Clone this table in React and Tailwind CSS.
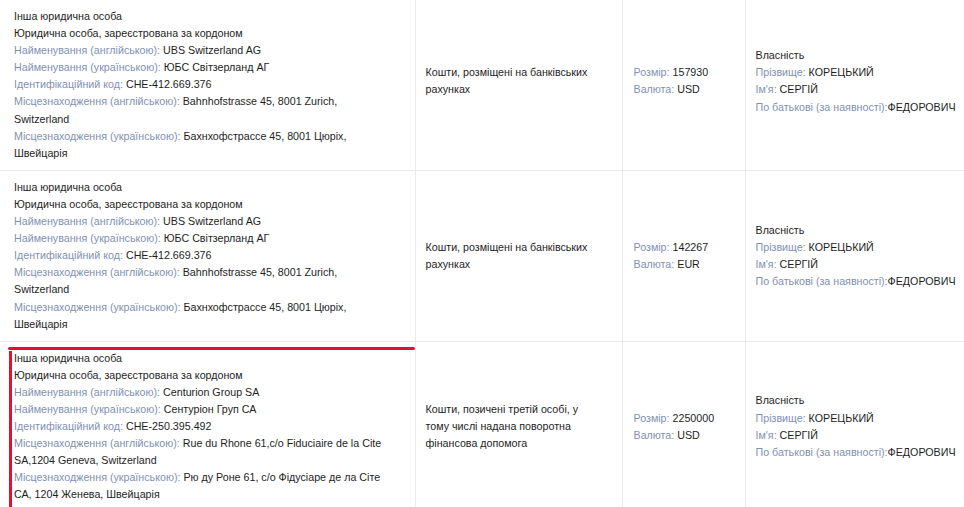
import React from "react";

const L = ({ children }) => <span className="text-[#7f91b3]">{children}</span>;

const rows = [
  {
    en: "UBS Switzerland AG",
    ua: "ЮБС Світзерланд АГ",
    code: "CHE-412.669.376",
    addrEn: "Bahnhofstrasse 45, 8001 Zurich, Switzerland",
    addrUa: "Бахнхофстрассе 45, 8001 Цюріх, Швейцарія",
    type: "Кошти, розміщені на банківських рахунках",
    size: "157930",
    cur: "USD",
    first: true,
  },
  {
    en: "UBS Switzerland AG",
    ua: "ЮБС Світзерланд АГ",
    code: "CHE-412.669.376",
    addrEn: "Bahnhofstrasse 45, 8001 Zurich, Switzerland",
    addrUa: "Бахнхофстрассе 45, 8001 Цюріх, Швейцарія",
    type: "Кошти, розміщені на банківських рахунках",
    size: "142267",
    cur: "EUR",
  },
  {
    en: "Centurion Group SA",
    ua: "Сентуріон Груп СА",
    code: "CHE-250.395.492",
    addrEn: "Rue du Rhone 61,c/o Fiduciaire de la Cite SA,1204 Geneva, Switzerland",
    addrUa: "Рю ду Роне 61, с/о Фідусіаре де ла Сіте СА, 1204 Женева, Швейцарія",
    type: "Кошти, позичені третій особі, у тому числі надана поворотна фінансова допомога",
    size: "2250000",
    cur: "USD",
    marked: true,
  },
];

export default function App() {
  return (
    <div
      className="w-[964px] h-[507px] overflow-hidden bg-white text-[10.7px] leading-[17.1px] text-[#1e1e1e]"
      style={{ fontFamily: '"Liberation Sans", Arial, sans-serif' }}
    >
      <table className="w-[980px] border-collapse table-fixed">
        <colgroup>
          <col className="w-[415px]" />
          <col className="w-[207px]" />
          <col className="w-[123px]" />
          <col className="w-[235px]" />
        </colgroup>
        <tbody>
          {rows.map((r, i) => {
            const pad = r.first ? "pt-[8px] pb-[15px]" : "py-[8px]";
            return (
              <tr key={i} className="border-b border-[#ececec]">
                <td className="relative align-middle pl-[14px] pr-[30px] py-[8px] border-r border-[#ececec]">
                  {r.marked && (
                    <>
                      <div className="absolute left-[8px] top-[5px] w-[407px] h-[3px] rounded-full bg-[#e3112e]" />
                      <div className="absolute left-[9px] top-[9px] w-[3px] h-[520px] bg-[#e3112e]" />
                    </>
                  )}
                  <div>Інша юридична особа</div>
                  <div>Юридична особа, зареєстрована за кордоном</div>
                  <div>
                    <L>Найменування (англійською):</L> {r.en}
                  </div>
                  <div>
                    <L>Найменування (українською):</L> {r.ua}
                  </div>
                  <div>
                    <L>Ідентифікаційний код:</L> {r.code}
                  </div>
                  <div>
                    <L>Місцезнаходження (англійською):</L> {r.addrEn}
                  </div>
                  <div>
                    <L>Місцезнаходження (українською):</L> {r.addrUa}
                  </div>
                </td>
                <td className={`align-middle pl-[10px] pr-[24px] ${pad} border-r border-[#ececec]`}>
                  {r.type}
                </td>
                <td className={`align-middle pl-[11px] pr-[8px] ${pad} border-r border-[#ececec]`}>
                  <div>
                    <L>Розмір:</L> {r.size}
                  </div>
                  <div>
                    <L>Валюта:</L> {r.cur}
                  </div>
                </td>
                <td className={`align-middle pl-[10px] pr-[4px] ${pad} whitespace-nowrap`}>
                  <div>Власність</div>
                  <div>
                    <L>Прізвище:</L> КОРЕЦЬКИЙ
                  </div>
                  <div>
                    <L>Ім'я:</L> СЕРГІЙ
                  </div>
                  <div>
                    <L>По батькові (за наявності):</L>ФЕДОРОВИЧ
                  </div>
                </td>
              </tr>
            );
          })}
        </tbody>
      </table>
    </div>
  );
}
